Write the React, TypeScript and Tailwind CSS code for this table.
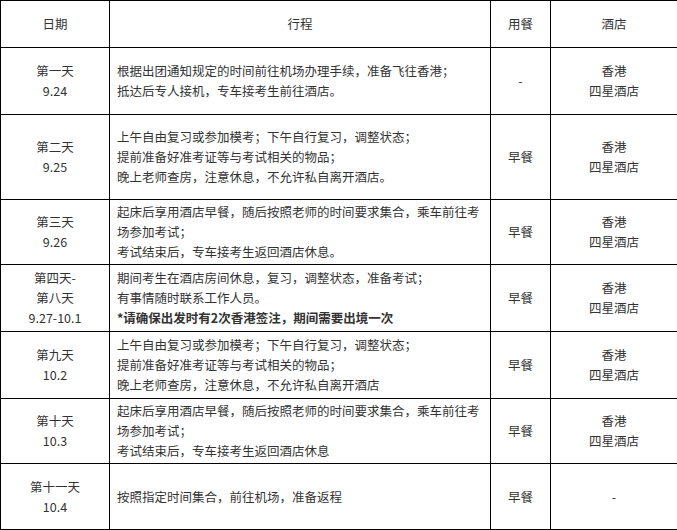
import type { ReactNode } from "react";

type Row = {
	day: string[];
	plan: ReactNode[];
	meal: string;
	hotel: string[];
	h: string;
};

const rows: Row[] = [
	{
		day: ["第一天", "9.24"],
		plan: ["根据出团通知规定的时间前往机场办理手续，准备飞往香港；", "抵达后专人接机，专车接考生前往酒店。"],
		meal: "-",
		hotel: ["香港", "四星酒店"],
		h: "h-[67px]",
	},
	{
		day: ["第二天", "9.25"],
		plan: [
			"上午自由复习或参加模考；下午自行复习，调整状态；",
			"提前准备好准考证等与考试相关的物品；",
			"晚上老师查房，注意休息，不允许私自离开酒店。",
		],
		meal: "早餐",
		hotel: ["香港", "四星酒店"],
		h: "h-[85px]",
	},
	{
		day: ["第三天", "9.26"],
		plan: [
			"起床后享用酒店早餐，随后按照老师的时间要求集合，乘车前往考",
			"场参加考试；",
			"考试结束后，专车接考生返回酒店休息。",
		],
		meal: "早餐",
		hotel: ["香港", "四星酒店"],
		h: "h-[65px]",
	},
	{
		day: ["第四天-", "第八天", "9.27-10.1"],
		plan: [
			"期间考生在酒店房间休息，复习，调整状态，准备考试；",
			"有事情随时联系工作人员。",
			<span className="font-bold">*请确保出发时有2次香港签注，期间需要出境一次</span>,
		],
		meal: "早餐",
		hotel: ["香港", "四星酒店"],
		h: "h-[67px]",
	},
	{
		day: ["第九天", "10.2"],
		plan: [
			"上午自由复习或参加模考；下午自行复习，调整状态；",
			"提前准备好准考证等与考试相关的物品；",
			"晚上老师查房，注意休息，不允许私自离开酒店",
		],
		meal: "早餐",
		hotel: ["香港", "四星酒店"],
		h: "h-[67px]",
	},
	{
		day: ["第十天", "10.3"],
		plan: [
			"起床后享用酒店早餐，随后按照老师的时间要求集合，乘车前往考",
			"场参加考试；",
			"考试结束后，专车接考生返回酒店休息",
		],
		meal: "早餐",
		hotel: ["香港", "四星酒店"],
		h: "h-[65px]",
	},
	{
		day: ["第十一天", "10.4"],
		plan: ["按照指定时间集合，前往机场，准备返程"],
		meal: "早餐",
		hotel: ["-"],
		h: "h-[66px]",
	},
];

export default function App() {
	return (
		<div className="w-[677px] h-[530px] bg-white text-[#333] font-['Noto_Sans_CJK_SC','Noto_Sans',sans-serif] text-[12.5px] leading-[20px]">
			<table className="w-[677px] table-fixed border-collapse">
				<colgroup>
					<col className="w-[109px]" />
					<col className="w-[381px]" />
					<col className="w-[60px]" />
					<col className="w-[127px]" />
				</colgroup>
				<thead>
					<tr className="h-[47px]">
						<th className="border border-black font-normal text-center">日期</th>
						<th className="border border-black font-normal text-center">行程</th>
						<th className="border border-black font-normal text-center">用餐</th>
						<th className="border border-black font-normal text-center">酒店</th>
					</tr>
				</thead>
				<tbody>
					{rows.map((row, i) => (
						<tr key={i} className={row.h}>
							<td className="border border-black p-0 text-center align-middle">
								{row.day.map((d, j) => (
									<div key={j}>{d}</div>
								))}
							</td>
							<td className="border border-black py-0 pl-[7px] pr-1 align-middle whitespace-nowrap">
								{row.plan.map((p, j) => (
									<div key={j}>{p}</div>
								))}
							</td>
							<td className="border border-black p-0 text-center align-middle">{row.meal}</td>
							<td className="border border-black p-0 text-center align-middle">
								{row.hotel.map((d, j) => (
									<div key={j}>{d}</div>
								))}
							</td>
						</tr>
					))}
				</tbody>
			</table>
		</div>
	);
}
